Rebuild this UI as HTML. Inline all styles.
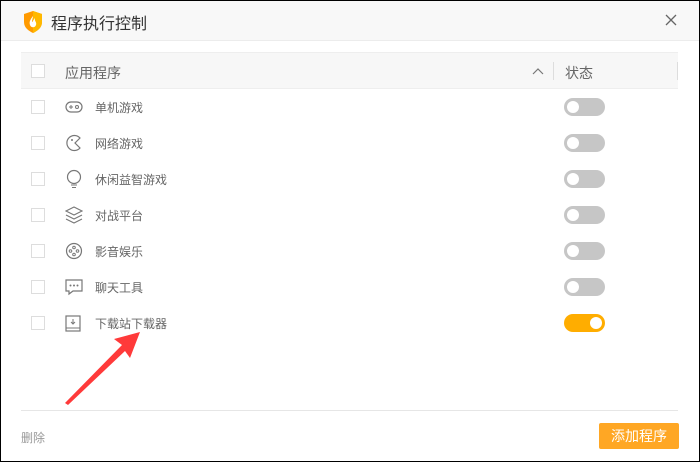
<!DOCTYPE html>
<html><head><meta charset="utf-8"><style>
*{margin:0;padding:0;box-sizing:border-box}
body{width:700px;height:462px;background:#000;font-family:"Liberation Sans","Noto Sans CJK SC",sans-serif;overflow:hidden}
.win{position:absolute;left:1px;top:1px;width:698px;height:460px;background:#fff}
.title{position:absolute;left:0;top:0;width:698px;height:40px;background:#f8f8f8;border-bottom:1px solid #ececec}
.title .t{position:absolute;left:50px;top:9px;font-size:16px;color:#333}
.close{position:absolute;left:664px;top:13px}
.hdr{position:absolute;left:20px;top:51px;width:657px;height:37px;background:#f7f7f7;border-top:1px solid #eee;border-bottom:1px solid #eee}
.cb{position:absolute;width:14px;height:14px;border:1px solid #ddd;background:#fff}
.txt{position:absolute;font-size:12px;color:#666}
.row .txt{top:10px !important}
.row{position:absolute;left:0;width:698px;height:36px}
.tg{position:absolute;left:563px;width:41px;height:18px;border-radius:9px;background:#c6c6c6}
.tg i{position:absolute;left:3px;top:3px;width:12px;height:12px;border-radius:6px;background:#fff}
.tg.on{background:#ffad00}.tg.on i{left:26px}
.ic{position:absolute;left:64px}
</style></head><body><div class="win">
<div class="title">
<svg style="position:absolute;left:22px;top:9px" width="20" height="24" viewBox="0 0 20 24"><path d="M10 1 L19 4 L19 12 C19 18 14 21 10 23 C6 21 1 18 1 12 L1 4 Z" fill="#ff9a00"/><path d="M10 1 L19 4 L19 12 C19 18 14 21 10 23 Z" fill="#ffb800"/><path d="M10 6 C7 10 6 12 7 15 C8 18 12 18 13 15 C14 12 11 11 12 8 C10 10 10 12 9 12 C9 10 10 8 10 6Z" fill="#fff"/></svg>
<div class="t">程序执行控制</div>
<svg class="close" width="12" height="12"><path d="M1 1L11 11M11 1L1 11" stroke="#666" stroke-width="1.3"/></svg>
</div>
<div class="hdr">
<div class="cb" style="left:10px;top:11px"></div>
<div class="txt" style="left:44px;top:10px;font-size:14px">应用程序</div>
<svg style="position:absolute;left:511px;top:14px" width="12" height="8"><path d="M1 7L6 2L11 7" stroke="#777" fill="none" stroke-width="1.2"/></svg>
<div style="position:absolute;left:532px;top:9px;width:1px;height:18px;background:#ddd"></div>
<div class="txt" style="left:544px;top:10px;font-size:14px">状态</div>
<div style="position:absolute;left:656px;top:9px;width:1px;height:18px;background:#ddd"></div>
</div>

<div class="row" style="top:88px"><div class="cb" style="left:30px;top:11px"></div>
<svg class="ic" style="top:10px" width="18" height="16"><rect x="1" y="3" width="16" height="10" rx="5" fill="none" stroke="#777" stroke-width="1.2"/><path d="M4 8h4M6 6v4" stroke="#777"/><circle cx="12" cy="8" r="1.5" fill="none" stroke="#777"/></svg>
<div class="txt" style="left:94px">单机游戏</div><div class="tg" style="top:9px"><i></i></div></div>

<div class="row" style="top:124px"><div class="cb" style="left:30px;top:11px"></div>
<svg class="ic" style="top:9px" width="18" height="18"><path d="M15 4 A7.5 7.5 0 1 0 15 14 L10 9 Z" fill="none" stroke="#777" stroke-width="1.2"/><circle cx="7" cy="6" r="1" fill="#777"/></svg>
<div class="txt" style="left:94px">网络游戏</div><div class="tg" style="top:9px"><i></i></div></div>

<div class="row" style="top:160px"><div class="cb" style="left:30px;top:11px"></div>
<svg class="ic" style="top:8px" width="18" height="20"><circle cx="9" cy="8" r="6.5" fill="none" stroke="#777" stroke-width="1.2"/><path d="M6 16h6M7 18.5h4" stroke="#777"/></svg>
<div class="txt" style="left:94px">休闲益智游戏</div><div class="tg" style="top:9px"><i></i></div></div>

<div class="row" style="top:196px"><div class="cb" style="left:30px;top:11px"></div>
<svg class="ic" style="top:9px" width="18" height="18"><path d="M9 1L17 5L9 9L1 5Z M1 9L9 13L17 9 M1 13L9 17L17 13" fill="none" stroke="#777" stroke-width="1.1"/></svg>
<div class="txt" style="left:94px">对战平台</div><div class="tg" style="top:9px"><i></i></div></div>

<div class="row" style="top:232px"><div class="cb" style="left:30px;top:11px"></div>
<svg class="ic" style="top:9px" width="18" height="18"><circle cx="9" cy="9" r="7.5" fill="none" stroke="#777" stroke-width="1.2"/><circle cx="9" cy="5.5" r="1.3" fill="none" stroke="#777"/><circle cx="5.5" cy="9" r="1.3" fill="none" stroke="#777"/><circle cx="12.5" cy="9" r="1.3" fill="none" stroke="#777"/><circle cx="9" cy="12.5" r="1.3" fill="none" stroke="#777"/></svg>
<div class="txt" style="left:94px">影音娱乐</div><div class="tg" style="top:9px"><i></i></div></div>

<div class="row" style="top:268px"><div class="cb" style="left:30px;top:11px"></div>
<svg class="ic" style="top:10px" width="18" height="17"><path d="M1 1H17V12H8L4 15V12H1Z" fill="none" stroke="#777" stroke-width="1.2"/><circle cx="5.5" cy="6.5" r="1" fill="#777"/><circle cx="9" cy="6.5" r="1" fill="#777"/><circle cx="12.5" cy="6.5" r="1" fill="#777"/></svg>
<div class="txt" style="left:94px">聊天工具</div><div class="tg" style="top:9px"><i></i></div></div>

<div class="row" style="top:304px"><div class="cb" style="left:30px;top:11px"></div>
<svg class="ic" style="top:10px" width="18" height="18"><rect x="1" y="1" width="14" height="15" fill="none" stroke="#777" stroke-width="1.2"/><path d="M1 13H15M8 4V9M6 7L8 9L10 7" fill="none" stroke="#777"/></svg>
<div class="txt" style="left:94px">下载站下载器</div><div class="tg on" style="top:9px"><i></i></div></div>

<svg style="position:absolute;left:0;top:0" width="698" height="460"><path d="M64 402 L121 344 L113 338 L139 331 L129 357 L124 350 L67 404 Z" fill="#ff3a3a"/></svg>

<div style="position:absolute;left:20px;top:409px;width:657px;height:1px;background:#e6e6e6"></div>
<div class="txt" style="left:20px;top:428px;color:#999">删除</div>
<div style="position:absolute;left:598px;top:422px;width:80px;height:26px;background:#ffa724;color:#fff;font-size:14px;text-align:center;line-height:26px;border-radius:2px">添加程序</div>
</div></body></html>
